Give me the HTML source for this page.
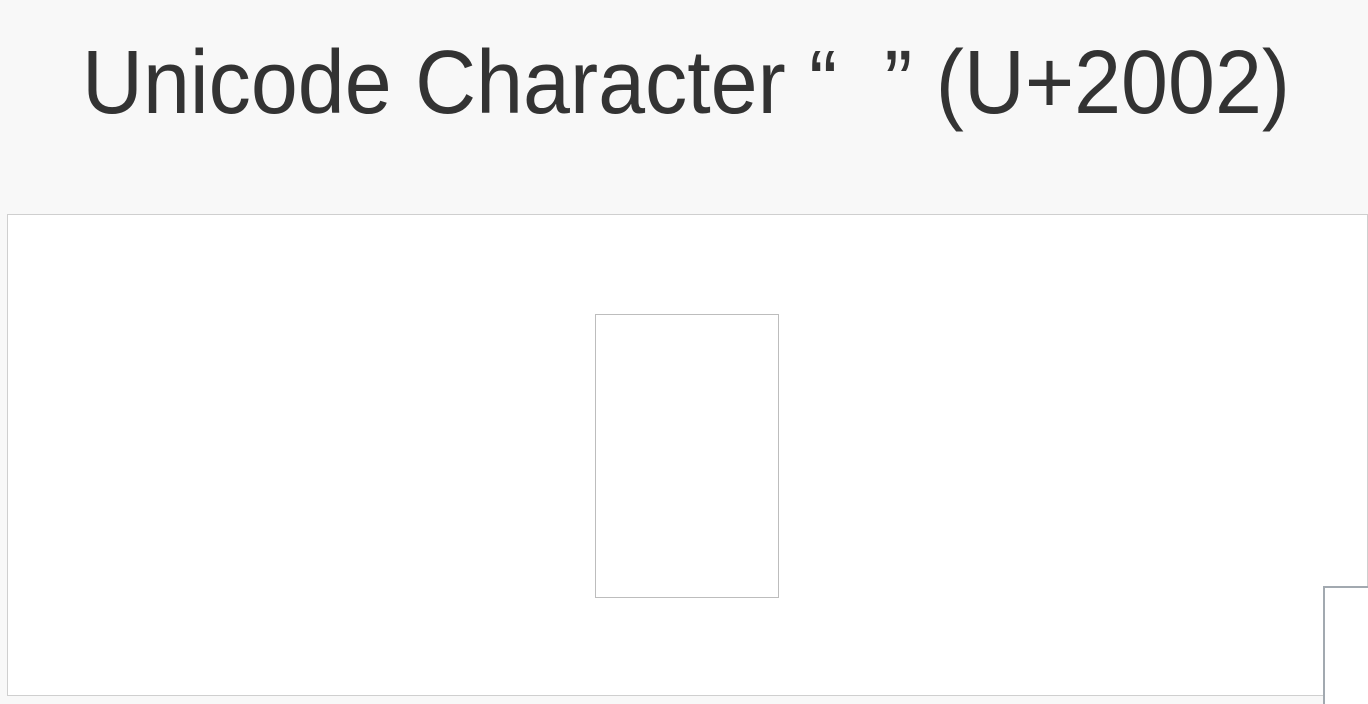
<!DOCTYPE html>
<html><head><style>
html,body{margin:0;padding:0;width:1368px;height:704px;overflow:hidden;background:#f8f8f8;position:relative;}
.box{position:absolute;left:7px;top:214px;width:1359px;height:480px;border:1px solid #cfcfcf;background:#fff;}
.in{position:absolute;left:595px;top:314px;width:182px;height:282px;border:1px solid #bdbdbd;background:#fff;}
.c{position:absolute;left:1323px;top:586px;width:45px;height:116px;border-left:2px solid #a2a9b0;border-top:2px solid #a2a9b0;background:#fff;}
svg{position:absolute;left:0;top:0;}
</style></head><body>
<svg width="1368" height="140"><text x="82" y="113" font-family="Liberation Sans, sans-serif" font-size="90" fill="#333" textLength="1208" lengthAdjust="spacingAndGlyphs" xml:space="preserve">Unicode Character “  ” (U+2002)</text></svg>
<div class="box"></div>
<div class="in"></div>
<div class="c"></div>
</body></html>
